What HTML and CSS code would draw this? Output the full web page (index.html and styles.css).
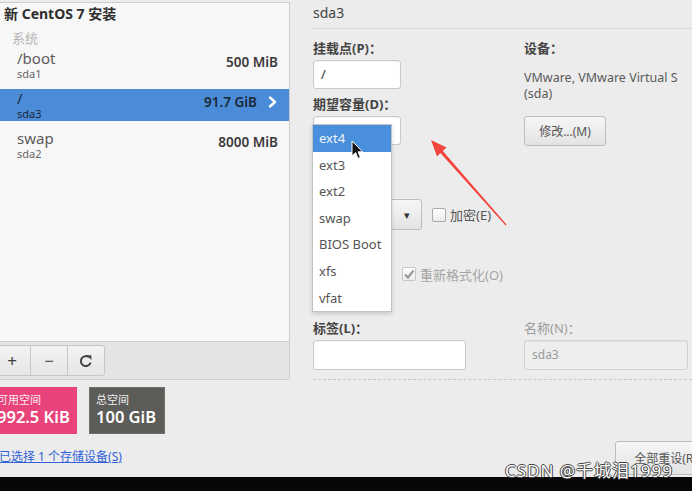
FILE: index.html
```html
<!DOCTYPE html>
<html lang="zh-CN">
<head>
    <meta charset="UTF-8">
    <title>手动分区 - CentOS 7</title>
    <link rel="stylesheet" href="styles.css">
</head>
<body>

<div class="screen">
    <div class="main">

        <!-- Ліва частина: список розділів -->
        <div class="sidebar">
            <div class="part-panel">
                <div class="part-list">
                    <div class="install-title">新 CentOS 7 安装</div>
                    <div class="group-name">系统</div>

                    <div class="part-row">
                        <div class="part-names">
                            <div class="mount">/boot</div>
                            <div class="dev">sda1</div>
                        </div>
                        <div class="size">500 MiB</div>
                    </div>

                    <div class="part-row selected">
                        <div class="part-names">
                            <div class="mount">/</div>
                            <div class="dev">sda3</div>
                        </div>
                        <div class="size">91.7 GiB</div>
                        <svg class="chevron" width="9" height="12" viewBox="0 0 9 12">
                            <polyline points="2,1.5 7,6 2,10.5" fill="none" stroke="#fff" stroke-width="2.4" stroke-linecap="round" stroke-linejoin="round"/>
                        </svg>
                    </div>

                    <div class="part-row">
                        <div class="part-names">
                            <div class="mount">swap</div>
                            <div class="dev">sda2</div>
                        </div>
                        <div class="size">8000 MiB</div>
                    </div>
                </div>

                <div class="toolbar">
                    <button class="tool-btn">+</button>
                    <button class="tool-btn">−</button>
                    <button class="tool-btn">
                        <svg width="16" height="16" viewBox="0 0 16 16">
                            <path d="M12.6 9.6 A5 5 0 1 1 11 4.2" fill="none" stroke="#444" stroke-width="2"/>
                            <polygon points="8.6,2.2 13.4,2.2 13.4,7" fill="#444"/>
                        </svg>
                    </button>
                </div>
            </div>

            <div class="space-boxes">
                <div class="space free">
                    <div class="space-label">可用空间</div>
                    <div class="space-value">992.5 KiB</div>
                </div>
                <div class="space total">
                    <div class="space-label">总空间</div>
                    <div class="space-value">100 GiB</div>
                </div>
            </div>

            <a class="device-link" href="#">已选择 1 个存储设备(S)</a>
        </div>

        <!-- Права частина: параметри розділу -->
        <div class="detail">
            <div class="detail-title">sda3</div>

            <div class="fields-top">
                <div class="col-left">
                    <label class="field-label mount-label">挂载点(P)：</label>
                    <div class="text-input mount-input">/</div>

                    <label class="field-label capacity-label">期望容量(D)：</label>
                    <div class="text-input capacity-input"></div>

                    <div class="field-row device-row">
                        <div class="combo device-combo">
                            <span class="combo-arrow">▾</span>
                        </div>
                        <label class="check">
                            <span class="check-box"></span>加密(E)
                        </label>
                    </div>

                    <div class="field-row fs-row">
                        <div class="combo fs-combo"></div>
                        <label class="check disabled">
                            <span class="check-box checked">
                                <svg width="12" height="12" viewBox="0 0 12 12">
                                    <polyline points="2,6.5 5,9.5 10.5,2.5" fill="none" stroke="#9a9a9a" stroke-width="2.2"/>
                                </svg>
                            </span>重新格式化(O)
                        </label>
                    </div>

                    <!-- Випадаюче меню файлової системи -->
                    <div class="fs-menu">
                        <div class="menu-item active">ext4</div>
                        <div class="menu-item">ext3</div>
                        <div class="menu-item">ext2</div>
                        <div class="menu-item">swap</div>
                        <div class="menu-item">BIOS Boot</div>
                        <div class="menu-item">xfs</div>
                        <div class="menu-item">vfat</div>
                    </div>

                    <svg class="pointer" width="13" height="20" viewBox="0 0 13 20">
                        <path d="M1 1 L1 16 L4.6 12.6 L7 18.4 L9.4 17.4 L7 11.8 L11.6 11.8 Z" fill="#111" stroke="#fff" stroke-width="1"/>
                    </svg>
                </div>

                <div class="col-right">
                    <div class="field-label device-label">设备：</div>
                    <div class="device-name">VMware, VMware Virtual S<br>(sda)</div>
                    <button class="btn modify-btn">修改...(M)</button>
                </div>
            </div>

            <div class="fields-bottom">
                <div class="label-field">
                    <label class="field-label">标签(L)：</label>
                    <div class="text-input label-input"></div>
                </div>
                <div class="name-field">
                    <label class="field-label name-label">名称(N)：</label>
                    <div class="text-input name-input">sda3</div>
                </div>
            </div>

            <div class="actions">
                <button class="btn reset-btn">全部重设(R)</button>
            </div>
        </div>
    </div>

    <div class="bottom-bar"></div>

    <svg class="red-arrow" width="692" height="491" viewBox="0 0 692 491">
        <polygon points="431,140 446.5,147.6 442.8,151 506.5,224.6 505.6,225.4 440.4,153.1 437,156.6" fill="#f2453b"/>
    </svg>

    <div class="watermark">CSDN @千城泪1999</div>
</div>

</body>
</html>
```

FILE: styles.css
```css
* {
    box-sizing: border-box;
}

body {
    margin: 0;
    background-color: #ececec;
    color: #555;
    font-family: "Noto Sans", "Noto Sans CJK SC", sans-serif;
}

.screen {
    position: relative;
    width: 692px;
    height: 491px;
    overflow: hidden;
    display: flex;
    flex-direction: column;
}

.main {
    height: 477px;
    display: flex;
    flex-shrink: 0;
}

.bottom-bar {
    flex: 1;
    background: #060606;
}

/* Список розділів */
.sidebar {
    width: 290px;
    flex-shrink: 0;
    display: flex;
    flex-direction: column;
}

.part-panel {
    margin-top: 2px;
    height: 378px;
    border: 1px solid #cdcdcd;
    border-left: none;
    border-radius: 0 0 4px 0;
    display: flex;
    flex-direction: column;
    overflow: hidden;
}

.part-list {
    flex: 1;
    background: #f7f7f7;
}

.install-title {
    padding: 1px 0 0 4px;
    font-size: 14px;
    line-height: 20px;
    font-weight: 700;
    color: #2e2e2e;
}

.group-name {
    margin-top: 5px;
    padding-left: 12px;
    font-size: 13px;
    line-height: 18px;
    color: #b5b5b5;
}

.part-row {
    height: 32px;
    margin-top: 2px;
    padding: 0 11px 0 17px;
    display: flex;
}

.part-row + .part-row {
    margin-top: 8px;
}

.mount {
    font-size: 15px;
    line-height: 18px;
    color: #5a5a5a;
}

.dev {
    font-size: 11px;
    line-height: 14px;
    color: #666;
}

.size {
    margin-left: auto;
    padding-top: 4px;
    font-size: 13.5px;
    line-height: 18px;
    font-weight: 600;
    color: #3a3a3a;
}

.part-row.selected {
    background: #4a8cd7;
}

.part-row.selected .mount,
.part-row.selected .dev,
.part-row.selected .size {
    color: #1c2838;
}

.chevron {
    margin: 7px 1px 0 11px;
}

.toolbar {
    height: 38px;
    padding-top: 3px;
    border-top: 1px solid #cfcfcf;
    background: #e4e4e4;
    display: flex;
    align-items: flex-start;
}

.tool-btn {
    width: 38px;
    height: 31px;
    margin-left: -1px;
    border: 1px solid #c6c6c6;
    background: linear-gradient(#f3f3f3, #e6e6e6);
    font-family: inherit;
    font-size: 17px;
    color: #3c3c3c;
    display: flex;
    align-items: center;
    justify-content: center;
    padding: 0;
}

.tool-btn:first-child {
    margin-left: -7px;
}

.tool-btn:last-child {
    border-radius: 0 3px 3px 0;
}

/* Вільне і загальне місце */
.space-boxes {
    margin-top: 7px;
    display: flex;
}

.space {
    height: 47px;
    padding: 6px 7px;
    color: #fff;
    white-space: nowrap;
}

.space-label {
    font-size: 11px;
    line-height: 14px;
    opacity: 0.9;
}

.space-value {
    font-size: 16.5px;
    line-height: 20px;
    font-weight: 600;
}

.free {
    margin-left: -10px;
    width: 87px;
    background: #e8437a;
}

.total {
    margin-left: 12px;
    width: 76px;
    padding: 5px 6px;
    background: #5c5c59;
    border: 1px solid #6e6e6b;
}

.device-link {
    margin: 15px 0 0 -1px;
    font-size: 12px;
    line-height: 16px;
    color: #2f62d8;
}

/* Параметри розділу */
.detail {
    flex: 1;
    min-width: 0;
    padding-left: 23px;
    display: flex;
    flex-direction: column;
}

.detail-title {
    height: 29px;
    padding-top: 4px;
    border-bottom: 1px solid #d9d9d9;
    font-size: 14px;
    line-height: 18px;
    color: #444;
}

.fields-top {
    display: flex;
}

.col-left {
    position: relative;
    width: 211px;
    flex-shrink: 0;
}

.field-label {
    display: block;
    font-size: 13px;
    line-height: 18px;
    font-weight: 700;
    color: #444;
}

.mount-label,
.device-label {
    margin-top: 10px;
}

.capacity-label {
    margin-top: 6px;
}

.text-input {
    height: 29px;
    margin-top: 3px;
    padding: 0 7px;
    border: 1px solid #c9c9c9;
    border-radius: 3px;
    background: #fff;
    box-shadow: inset 0 1px 1px rgba(0, 0, 0, 0.05);
    font-size: 13px;
    line-height: 27px;
    color: #333;
}

.mount-input,
.capacity-input {
    width: 88px;
}

.field-row {
    display: flex;
    align-items: center;
}

.device-row {
    margin-top: 54px;
}

.fs-row {
    margin-top: 29px;
}

.combo {
    height: 31px;
    padding: 0 11px 0 8px;
    border: 1px solid #bdbdbd;
    border-radius: 3px;
    background: linear-gradient(#f6f6f6, #e4e4e4);
    display: flex;
    align-items: center;
    justify-content: flex-end;
}

.device-combo {
    width: 109px;
}

.fs-combo {
    width: 78px;
    height: 30px;
}

.combo-arrow {
    font-size: 11px;
    color: #333;
}

.check {
    display: flex;
    align-items: center;
    margin-left: 10px;
    font-size: 13px;
    color: #555;
}

.fs-row .check {
    margin-left: 11px;
}

.check-box {
    width: 14px;
    height: 14px;
    margin-right: 4px;
    border: 1px solid #a9a9a9;
    border-radius: 2px;
    background: linear-gradient(#fff, #ececec);
    display: flex;
    align-items: center;
    justify-content: center;
}

.check.disabled {
    color: #a5a5a5;
}

.check.disabled .check-box {
    border-color: #c6c6c6;
}

.fs-menu {
    position: absolute;
    left: -1px;
    top: 95px;
    width: 80px;
    border: 1px solid #c3c3c3;
    background: #fff;
    box-shadow: 0 2px 4px rgba(0, 0, 0, 0.15);
}

.menu-item {
    height: 26.6px;
    padding-left: 6px;
    font-size: 13px;
    line-height: 26.6px;
    color: #555;
}

.menu-item.active {
    background: #4a8fdb;
    color: #eef4fc;
}

.pointer {
    position: absolute;
    left: 38px;
    top: 111px;
}

.col-right {
    flex: 1;
}

.device-name {
    margin-top: 13px;
    font-size: 12.5px;
    line-height: 16px;
    color: #5a5a5a;
}

.btn {
    border: 1px solid #bcbcbc;
    border-radius: 3px;
    background: linear-gradient(#f6f6f6, #e3e3e3);
    font-family: inherit;
    font-size: 12px;
    color: #555;
    padding: 0;
}

.modify-btn {
    display: block;
    width: 82px;
    height: 30px;
    margin-top: 14px;
}

.fields-bottom {
    margin-top: 30px;
    padding-bottom: 9px;
    border-bottom: 1px dashed #c6c6c6;
    display: flex;
}

.label-field {
    width: 211px;
}

.label-input {
    width: 153px;
    height: 30px;
}

.name-label {
    font-weight: 400;
    color: #9d9d9d;
}

.name-input {
    width: 164px;
    height: 30px;
    background: #eeeeee;
    border-color: #d2d2d2;
    font-size: 12px;
    color: #9a9a9a;
}

.actions {
    margin: 61px -24px 0 0;
    display: flex;
    justify-content: flex-end;
}

.reset-btn {
    width: 101px;
    height: 34px;
}

/* Накладені елементи */
.red-arrow {
    position: absolute;
    left: 0;
    top: 0;
    pointer-events: none;
}

.watermark {
    position: absolute;
    left: 505px;
    top: 460px;
    font-size: 17px;
    line-height: 22px;
    letter-spacing: 1px;
    color: #fff;
    text-shadow: -1px 0 #444, 1px 0 #444, 0 -1px #444, 0 1px #444;
}
```
